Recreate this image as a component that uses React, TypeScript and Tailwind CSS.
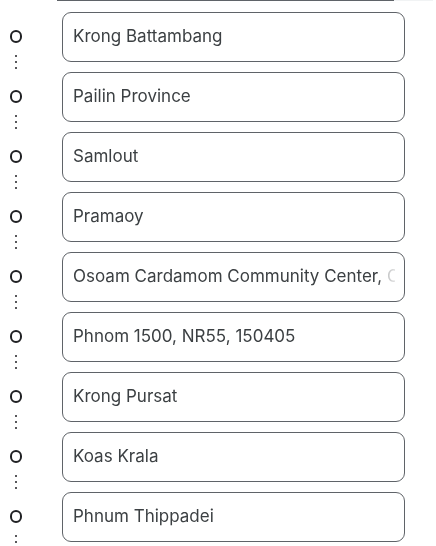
import React from "react";

const places = [
  "Krong Battambang",
  "Pailin Province",
  "Samlout",
  "Pramaoy",
  "Osoam Cardamom Community Center, Cardamom Mountains",
  "Phnom 1500, NR55, 150405",
  "Krong Pursat",
  "Koas Krala",
  "Phnum Thippadei",
];

function StopMarker() {
  return (
    <div className="flex w-[31px] shrink-0 flex-col items-center pt-[18px]">
      <div className="h-[13px] w-[12px] rounded-full border-2 border-[#202124]" />
      <div className="mt-[12px] flex flex-col items-center gap-[4px]">
        <span className="h-[2px] w-[2px] rounded-full bg-[#202124]" />
        <span className="h-[2px] w-[2px] rounded-full bg-[#202124]" />
        <span className="h-[2px] w-[2px] rounded-full bg-[#202124]" />
      </div>
    </div>
  );
}

export default function App() {
  return (
    <div
      className="min-h-[546px] w-[436px] bg-white"
      style={{ fontFamily: "Inter, Roboto, 'Noto Sans', Arial, sans-serif" }}
    >
      {/* tail of the box above, cut off by the viewport */}
      <div className="flex h-px">
        <div className="w-[57px]" />
        <div className="w-[337px] bg-[#5f6368]" />
        <div className="w-[39px] bg-[#f1f3f4]" />
      </div>

      <div className="pt-[11px]">
        {places.map((place) => (
          <div key={place} className="flex h-[60px]">
            <StopMarker />
            <div className="ml-[31px] flex h-[50px] w-[343px] items-center rounded-[9px] border border-[#5f6368] pl-[10px] pr-[9px]">
              <div className="overflow-hidden">
                <span
                  className="block whitespace-nowrap text-[17px] text-[#3c4043]"
                  style={{
                    maskImage:
                      "linear-gradient(to right, black 306px, rgba(0,0,0,0.35) 312px, transparent 330px)",
                    WebkitMaskImage:
                      "linear-gradient(to right, black 306px, rgba(0,0,0,0.35) 312px, transparent 330px)",
                  }}
                >
                  {place}
                </span>
              </div>
            </div>
          </div>
        ))}
      </div>
    </div>
  );
}
